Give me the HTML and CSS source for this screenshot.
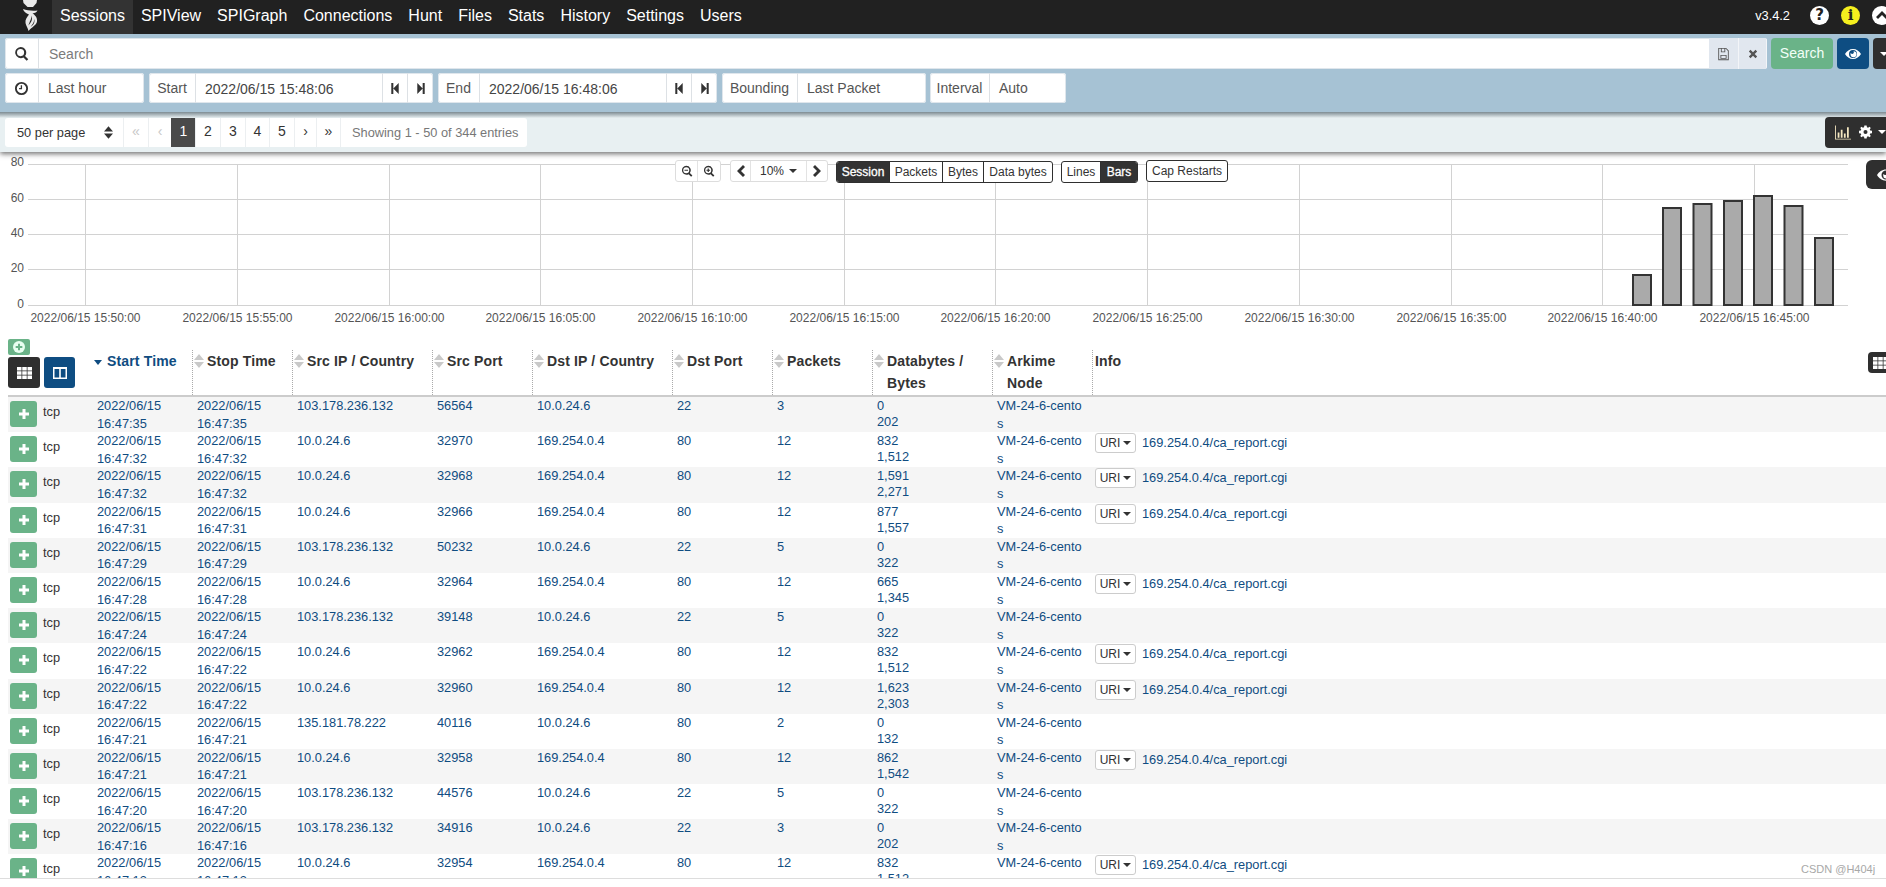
FILE: index.html
```html
<!DOCTYPE html>
<html lang="en">
<head>
<meta charset="utf-8">
<title>Arkime Sessions</title>
<link rel="stylesheet" href="styles.css">
</head>
<body>
<svg class="sprite" aria-hidden="true">
  <symbol id="plus" viewBox="0 0 12 12"><path d="M4.500 1h3v3.500H11v3H7.500V11h-3V7.500H1v-3h3.500z"/></symbol>
  <symbol id="search" viewBox="0 0 16 16"><path fill-rule="evenodd" d="M7 1a6 6 0 0 1 4.800 9.600l3.400 3.400-1.700 1.700-3.400-3.400A6 6 0 1 1 7 1zm0 2.200a3.800 3.800 0 1 0 0 7.600 3.800 3.800 0 0 0 0-7.600z"/></symbol>
  <symbol id="zoomout" viewBox="0 0 16 16"><path fill-rule="evenodd" d="M7 1a6 6 0 0 1 4.800 9.600l3.400 3.400-1.700 1.700-3.400-3.400A6 6 0 1 1 7 1zm0 2a4 4 0 1 0 0 8 4 4 0 0 0 0-8zM4.600 6.200h4.800v1.600H4.600z"/></symbol>
  <symbol id="zoomin" viewBox="0 0 16 16"><path fill-rule="evenodd" d="M7 1a6 6 0 0 1 4.800 9.600l3.400 3.400-1.700 1.700-3.400-3.400A6 6 0 1 1 7 1zm0 2a4 4 0 1 0 0 8 4 4 0 0 0 0-8zM6.200 4.600h1.600v1.600h1.600v1.600H7.800v1.600H6.200V7.800H4.600V6.200h1.600z"/></symbol>
  <symbol id="clock" viewBox="0 0 16 16"><path fill-rule="evenodd" d="M8 1a7 7 0 1 1 0 14A7 7 0 0 1 8 1zm0 2a5 5 0 1 0 0 10A5 5 0 0 0 8 3zM7.200 4.500h1.400v4.200H5.400V7.400h1.800z"/></symbol>
  <symbol id="first" viewBox="0 0 10 14"><path d="M1 1h2.200v12H1zM9 1v12L3.200 7z"/></symbol>
  <symbol id="last" viewBox="0 0 10 14"><path d="M9 1H6.800v12H9zM1 1v12l5.800-6z"/></symbol>
  <symbol id="save" viewBox="0 0 12 16"><path fill-rule="evenodd" d="M0 1h9l3 3v11H0zm1 1v12h10V4.500L8.600 2H8v4H3V2zm3 0v3h3V2zM2.500 9h7v4.500h-7zm1 1v2.500h5V10z"/></symbol>
  <symbol id="times" viewBox="0 0 12 12"><path d="M3 1l3 3 3-3 2 2-3 3 3 3-2 2-3-3-3 3-2-2 3-3-3-3z"/></symbol>
  <symbol id="eye" viewBox="0 0 16 10"><path fill-rule="evenodd" d="M8 0c3.400 0 6.300 2.100 8 5-1.700 2.900-4.600 5-8 5S1.700 7.900 0 5c1.700-2.900 4.600-5 8-5zm0 1a4 4 0 1 0 0 8 4 4 0 0 0 0-8zm.5 1.200a3 3 0 1 1-3 3c0-.4.100-.8.200-1.100.4.600 1 .9 1.700.9a2 2 0 0 0 1.100-2.800z"/></symbol>
  <symbol id="bars" viewBox="0 0 18 16"><path d="M0 0h1v15h17v1H0zM3 8h2v6H3zM6.500 5h2v9h-2zM10 9h2v5h-2zM13.500 2h2v12h-2z"/></symbol>
  <symbol id="cog" viewBox="0 0 16 16"><path fill-rule="evenodd" d="M6.600 0h2.800l.4 2.200 1.400.6L12.900 1.500l1.600 1.600-1.300 1.700.6 1.400 2.200.4v2.800l-2.200.4-.6 1.400 1.300 1.800-1.600 1.600-1.700-1.300-1.400.6-.4 2.100H6.600l-.4-2.100-1.400-.6-1.700 1.300-1.600-1.600 1.300-1.800-.6-1.400L0 9.400V6.600l2.200-.4.600-1.400-1.300-1.700 1.600-1.600 1.700 1.300 1.400-.6zM8 5.500a2.500 2.500 0 1 0 0 5 2.500 2.500 0 0 0 0-5z"/></symbol>
  <symbol id="grid" viewBox="0 0 15 12"><path d="M0 0h4.500v3.400H0zM5.250 0h4.500v3.400h-4.500zM10.500 0H15v3.400h-4.500zM0 4.300h4.500v3.400H0zM5.250 4.300h4.500v3.400h-4.500zM10.500 4.300H15v3.400h-4.500zM0 8.600h4.500V12H0zM5.250 8.600h4.500V12h-4.500zM10.500 8.600H15V12h-4.500z"/></symbol>
  <symbol id="cols" viewBox="0 0 14 12"><path fill-rule="evenodd" d="M0 0h14v12H0zm1.500 2v8.500h4.700V2zm6.300 0v8.500h4.700V2z"/></symbol>
  <symbol id="sort" viewBox="0 0 10 14"><path d="M5 0l5 6H0zM5 14L0 8h10z"/></symbol>
  <symbol id="left" viewBox="0 0 8 12"><path d="M6 0l2 2-4 4 4 4-2 2-6-6z"/></symbol>
  <symbol id="right" viewBox="0 0 8 12"><path d="M2 0L0 2l4 4-4 4 2 2 6-6z"/></symbol>
</svg>

<nav class="navbar">
  <a class="logo">
    <svg viewBox="0 0 52 34" width="52" height="34"><path class="logo-w" d="M23 0h14l-.500 3-3.500 4h-5.500L23.500 3zM23 9c4 1.500 9 2 14.500 1.500-.500 1.500-2.500 2.500-5 3 2.500 1.500 5 4 4.500 8-.500 3.500-5 5.500-8.500 9.500-.500-3-2.500-5-3-8-.500-3.500 1.500-6 3.500-8.500C26 13.500 23.500 11.500 23 9z"/><path class="logo-d" d="M31 15.500c1 3-1.500 6-2.500 10 2.500-3 4.800-6 2.500-10zM34 19c.5 3-1.500 5.500-3.500 8 2.500-1.500 5-4.500 3.500-8z"/></svg>
  </a>
  <a class="nav-item active">Sessions</a>
  <a class="nav-item">SPIView</a>
  <a class="nav-item">SPIGraph</a>
  <a class="nav-item">Connections</a>
  <a class="nav-item">Hunt</a>
  <a class="nav-item">Files</a>
  <a class="nav-item">Stats</a>
  <a class="nav-item">History</a>
  <a class="nav-item">Settings</a>
  <a class="nav-item">Users</a>
  <div class="nav-right">
    <span class="version">v3.4.2</span>
    <span class="round round-help">?</span>
    <span class="round round-info">i</span>
    <span class="round round-up"><svg viewBox="0 0 12 8" width="12" height="8"><path d="M6 0l6 6-2 2-4-4-4 4-2-2z"/></svg></span>
  </div>
</nav>

<section class="searchbar">
  <div class="sb-row sb-row-1">
    <div class="igroup grow">
      <span class="addon w34"><svg class="ic15"><use href="#search"/></svg></span>
      <span class="search-input">Search</span>
      <span class="addon tint w30"><svg class="ic-save"><use href="#save"/></svg></span>
      <span class="addon tint w28"><svg class="ic-times"><use href="#times"/></svg></span>
    </div>
    <a class="btn btn-green">Search</a>
    <a class="btn btn-blue"><svg class="ic-eye"><use href="#eye"/></svg></a>
    <a class="btn btn-dark btn-cut"><span class="caret caret-w"></span></a>
  </div>
  <div class="sb-row sb-row-2">
    <div class="igroup g-time">
      <span class="addon w34"><svg class="ic15"><use href="#clock"/></svg></span>
      <span class="val">Last hour</span>
    </div>
    <div class="igroup g-start">
      <span class="addon label w47">Start</span>
      <span class="val date w187">2022/06/15 15:48:06</span>
      <span class="addon step"><svg class="ic-step"><use href="#first"/></svg></span>
      <span class="addon step"><svg class="ic-step"><use href="#last"/></svg></span>
    </div>
    <div class="igroup g-end">
      <span class="addon label w42">End</span>
      <span class="val date w187">2022/06/15 16:48:06</span>
      <span class="addon step"><svg class="ic-step"><use href="#first"/></svg></span>
      <span class="addon step"><svg class="ic-step"><use href="#last"/></svg></span>
    </div>
    <div class="igroup g-bound">
      <span class="addon label w76">Bounding</span>
      <span class="val">Last Packet</span>
    </div>
    <div class="igroup g-int">
      <span class="addon label w60">Interval</span>
      <span class="val">Auto</span>
    </div>
  </div>
</section>

<section class="paging">
  <div class="pager">
    <span class="per-page">50 per page<svg class="ic-sort dark"><use href="#sort"/></svg></span>
    <a class="pg w25 off">«</a>
    <a class="pg w23 off">‹</a>
    <a class="pg w24 on">1</a>
    <a class="pg w25">2</a>
    <a class="pg w25">3</a>
    <a class="pg w24">4</a>
    <a class="pg w25">5</a>
    <a class="pg w22">›</a>
    <a class="pg w24">»</a>
    <span class="showing">Showing 1 - 50 of 344 entries</span>
  </div>
  <a class="btn btn-dark tools">
    <svg class="ic-bars"><use href="#bars"/></svg>
    <svg class="ic-cog"><use href="#cog"/></svg>
    <span class="caret caret-w"></span>
  </a>
</section>

<section class="chart">
  <svg class="plot" viewBox="0 152 1886 187" width="1886" height="187">
    <g class="grid">
      <path d="M28 164.500H1848M28 199.500H1848M28 234.500H1848M28 269.500H1848M28 305.500H1848"/>
      <path d="M85.500 164V305M237.500 164V305M389.500 164V305M540.500 164V305M692.500 164V305M844.500 164V305M995.500 164V305M1147.500 164V305M1299.500 164V305M1451.500 164V305M1602.500 164V305M1754.500 164V305"/>
    </g>
    <g class="ylabels">
      <text x="24" y="166">80</text><text x="24" y="202">60</text><text x="24" y="237">40</text><text x="24" y="272">20</text><text x="24" y="308">0</text>
    </g>
    <g class="xlabels">
      <text x="85.500" y="322">2022/06/15 15:50:00</text>
      <text x="237.500" y="322">2022/06/15 15:55:00</text>
      <text x="389.500" y="322">2022/06/15 16:00:00</text>
      <text x="540.500" y="322">2022/06/15 16:05:00</text>
      <text x="692.500" y="322">2022/06/15 16:10:00</text>
      <text x="844.500" y="322">2022/06/15 16:15:00</text>
      <text x="995.500" y="322">2022/06/15 16:20:00</text>
      <text x="1147.500" y="322">2022/06/15 16:25:00</text>
      <text x="1299.500" y="322">2022/06/15 16:30:00</text>
      <text x="1451.500" y="322">2022/06/15 16:35:00</text>
      <text x="1602.500" y="322">2022/06/15 16:40:00</text>
      <text x="1754.500" y="322">2022/06/15 16:45:00</text>
    </g>
    <g class="barset">
      <rect x="1633" y="275" width="18" height="30"/>
      <rect x="1663" y="208" width="18" height="97"/>
      <rect x="1693.500" y="204" width="18" height="101"/>
      <rect x="1724" y="201" width="18" height="104"/>
      <rect x="1754" y="196" width="18" height="109"/>
      <rect x="1784.500" y="206" width="18" height="99"/>
      <rect x="1815" y="238" width="18" height="67"/>
    </g>
  </svg>
  <div class="chart-tools">
    <div class="tg tg-light">
      <a class="tb w22"><svg class="ic12"><use href="#zoomout"/></svg></a>
      <a class="tb w22"><svg class="ic12"><use href="#zoomin"/></svg></a>
    </div>
    <div class="tg tg-light gap-a">
      <a class="tb w20"><svg class="ic-chev"><use href="#left"/></svg></a>
      <a class="tb w58">10% <span class="caret caret-d"></span></a>
      <a class="tb w20"><svg class="ic-chev"><use href="#right"/></svg></a>
    </div>
    <div class="tg tg-dark gap-b down1">
      <a class="td sel w54">Session</a>
      <a class="td w53">Packets</a>
      <a class="td w41">Bytes</a>
      <a class="td w69">Data bytes</a>
    </div>
    <div class="tg tg-dark gap-c down1">
      <a class="td w40">Lines</a>
      <a class="td sel w37">Bars</a>
    </div>
    <div class="tg tg-dark gap-c">
      <a class="td w82">Cap Restarts</a>
    </div>
  </div>
  <a class="btn btn-dark map-btn"><svg class="ic-map"><use href="#eye"/></svg></a>
</section>

<section class="results">
  <a class="btn btn-dark table-tool"><svg class="ic-grid"><use href="#grid"/></svg></a>
  <header class="thead">
    <div class="th th-tools">
      <a class="mini-add"><span class="mini-dot"><svg class="ic7"><use href="#plus"/></svg></span></a>
      <div class="tool-row">
        <a class="tool tool-dark"><svg class="ic-grid"><use href="#grid"/></svg></a>
        <a class="tool tool-blue"><svg class="ic-cols"><use href="#cols"/></svg></a>
      </div>
    </div>
    <div class="th th-first sorted"><span class="sort-down"></span><span>Start Time</span></div>
    <div class="th"><svg class="ic-sort"><use href="#sort"/></svg><span>Stop Time</span></div>
    <div class="th"><svg class="ic-sort"><use href="#sort"/></svg><span>Src IP / Country</span></div>
    <div class="th"><svg class="ic-sort"><use href="#sort"/></svg><span>Src Port</span></div>
    <div class="th"><svg class="ic-sort"><use href="#sort"/></svg><span>Dst IP / Country</span></div>
    <div class="th"><svg class="ic-sort"><use href="#sort"/></svg><span>Dst Port</span></div>
    <div class="th"><svg class="ic-sort"><use href="#sort"/></svg><span>Packets</span></div>
    <div class="th"><svg class="ic-sort"><use href="#sort"/></svg><span>Databytes /<br>Bytes</span></div>
    <div class="th"><svg class="ic-sort"><use href="#sort"/></svg><span>Arkime<br>Node</span></div>
    <div class="th th-info"><span>Info</span></div>
  </header>
  <div class="tbody">
    <div class="row"><div class="c-proto"><a class="add"><svg class="ic12"><use href="#plus"/></svg></a><span>tcp</span></div><div class="c">2022/06/15<br>16:47:35</div><div class="c">2022/06/15<br>16:47:35</div><div class="c">103.178.236.132</div><div class="c">56564</div><div class="c">10.0.24.6</div><div class="c">22</div><div class="c">3</div><div class="c c-data">0<br>202</div><div class="c c-node">VM-24-6-centos</div><div class="c c-info"></div></div>
    <div class="row"><div class="c-proto"><a class="add"><svg class="ic12"><use href="#plus"/></svg></a><span>tcp</span></div><div class="c">2022/06/15<br>16:47:32</div><div class="c">2022/06/15<br>16:47:32</div><div class="c">10.0.24.6</div><div class="c">32970</div><div class="c">169.254.0.4</div><div class="c">80</div><div class="c">12</div><div class="c c-data">832<br>1,512</div><div class="c c-node">VM-24-6-centos</div><div class="c c-info"><a class="uri">URI<span class="caret caret-d"></span></a><span>169.254.0.4/ca_report.cgi</span></div></div>
    <div class="row"><div class="c-proto"><a class="add"><svg class="ic12"><use href="#plus"/></svg></a><span>tcp</span></div><div class="c">2022/06/15<br>16:47:32</div><div class="c">2022/06/15<br>16:47:32</div><div class="c">10.0.24.6</div><div class="c">32968</div><div class="c">169.254.0.4</div><div class="c">80</div><div class="c">12</div><div class="c c-data">1,591<br>2,271</div><div class="c c-node">VM-24-6-centos</div><div class="c c-info"><a class="uri">URI<span class="caret caret-d"></span></a><span>169.254.0.4/ca_report.cgi</span></div></div>
    <div class="row"><div class="c-proto"><a class="add"><svg class="ic12"><use href="#plus"/></svg></a><span>tcp</span></div><div class="c">2022/06/15<br>16:47:31</div><div class="c">2022/06/15<br>16:47:31</div><div class="c">10.0.24.6</div><div class="c">32966</div><div class="c">169.254.0.4</div><div class="c">80</div><div class="c">12</div><div class="c c-data">877<br>1,557</div><div class="c c-node">VM-24-6-centos</div><div class="c c-info"><a class="uri">URI<span class="caret caret-d"></span></a><span>169.254.0.4/ca_report.cgi</span></div></div>
    <div class="row"><div class="c-proto"><a class="add"><svg class="ic12"><use href="#plus"/></svg></a><span>tcp</span></div><div class="c">2022/06/15<br>16:47:29</div><div class="c">2022/06/15<br>16:47:29</div><div class="c">103.178.236.132</div><div class="c">50232</div><div class="c">10.0.24.6</div><div class="c">22</div><div class="c">5</div><div class="c c-data">0<br>322</div><div class="c c-node">VM-24-6-centos</div><div class="c c-info"></div></div>
    <div class="row"><div class="c-proto"><a class="add"><svg class="ic12"><use href="#plus"/></svg></a><span>tcp</span></div><div class="c">2022/06/15<br>16:47:28</div><div class="c">2022/06/15<br>16:47:28</div><div class="c">10.0.24.6</div><div class="c">32964</div><div class="c">169.254.0.4</div><div class="c">80</div><div class="c">12</div><div class="c c-data">665<br>1,345</div><div class="c c-node">VM-24-6-centos</div><div class="c c-info"><a class="uri">URI<span class="caret caret-d"></span></a><span>169.254.0.4/ca_report.cgi</span></div></div>
    <div class="row"><div class="c-proto"><a class="add"><svg class="ic12"><use href="#plus"/></svg></a><span>tcp</span></div><div class="c">2022/06/15<br>16:47:24</div><div class="c">2022/06/15<br>16:47:24</div><div class="c">103.178.236.132</div><div class="c">39148</div><div class="c">10.0.24.6</div><div class="c">22</div><div class="c">5</div><div class="c c-data">0<br>322</div><div class="c c-node">VM-24-6-centos</div><div class="c c-info"></div></div>
    <div class="row"><div class="c-proto"><a class="add"><svg class="ic12"><use href="#plus"/></svg></a><span>tcp</span></div><div class="c">2022/06/15<br>16:47:22</div><div class="c">2022/06/15<br>16:47:22</div><div class="c">10.0.24.6</div><div class="c">32962</div><div class="c">169.254.0.4</div><div class="c">80</div><div class="c">12</div><div class="c c-data">832<br>1,512</div><div class="c c-node">VM-24-6-centos</div><div class="c c-info"><a class="uri">URI<span class="caret caret-d"></span></a><span>169.254.0.4/ca_report.cgi</span></div></div>
    <div class="row"><div class="c-proto"><a class="add"><svg class="ic12"><use href="#plus"/></svg></a><span>tcp</span></div><div class="c">2022/06/15<br>16:47:22</div><div class="c">2022/06/15<br>16:47:22</div><div class="c">10.0.24.6</div><div class="c">32960</div><div class="c">169.254.0.4</div><div class="c">80</div><div class="c">12</div><div class="c c-data">1,623<br>2,303</div><div class="c c-node">VM-24-6-centos</div><div class="c c-info"><a class="uri">URI<span class="caret caret-d"></span></a><span>169.254.0.4/ca_report.cgi</span></div></div>
    <div class="row"><div class="c-proto"><a class="add"><svg class="ic12"><use href="#plus"/></svg></a><span>tcp</span></div><div class="c">2022/06/15<br>16:47:21</div><div class="c">2022/06/15<br>16:47:21</div><div class="c">135.181.78.222</div><div class="c">40116</div><div class="c">10.0.24.6</div><div class="c">80</div><div class="c">2</div><div class="c c-data">0<br>132</div><div class="c c-node">VM-24-6-centos</div><div class="c c-info"></div></div>
    <div class="row"><div class="c-proto"><a class="add"><svg class="ic12"><use href="#plus"/></svg></a><span>tcp</span></div><div class="c">2022/06/15<br>16:47:21</div><div class="c">2022/06/15<br>16:47:21</div><div class="c">10.0.24.6</div><div class="c">32958</div><div class="c">169.254.0.4</div><div class="c">80</div><div class="c">12</div><div class="c c-data">862<br>1,542</div><div class="c c-node">VM-24-6-centos</div><div class="c c-info"><a class="uri">URI<span class="caret caret-d"></span></a><span>169.254.0.4/ca_report.cgi</span></div></div>
    <div class="row"><div class="c-proto"><a class="add"><svg class="ic12"><use href="#plus"/></svg></a><span>tcp</span></div><div class="c">2022/06/15<br>16:47:20</div><div class="c">2022/06/15<br>16:47:20</div><div class="c">103.178.236.132</div><div class="c">44576</div><div class="c">10.0.24.6</div><div class="c">22</div><div class="c">5</div><div class="c c-data">0<br>322</div><div class="c c-node">VM-24-6-centos</div><div class="c c-info"></div></div>
    <div class="row"><div class="c-proto"><a class="add"><svg class="ic12"><use href="#plus"/></svg></a><span>tcp</span></div><div class="c">2022/06/15<br>16:47:16</div><div class="c">2022/06/15<br>16:47:16</div><div class="c">103.178.236.132</div><div class="c">34916</div><div class="c">10.0.24.6</div><div class="c">22</div><div class="c">3</div><div class="c c-data">0<br>202</div><div class="c c-node">VM-24-6-centos</div><div class="c c-info"></div></div>
    <div class="row"><div class="c-proto"><a class="add"><svg class="ic12"><use href="#plus"/></svg></a><span>tcp</span></div><div class="c">2022/06/15<br>16:47:13</div><div class="c">2022/06/15<br>16:47:13</div><div class="c">10.0.24.6</div><div class="c">32954</div><div class="c">169.254.0.4</div><div class="c">80</div><div class="c">12</div><div class="c c-data">832<br>1,512</div><div class="c c-node">VM-24-6-centos</div><div class="c c-info"><a class="uri">URI<span class="caret caret-d"></span></a><span>169.254.0.4/ca_report.cgi</span></div></div>
  </div>
  <span class="watermark">CSDN @H404j</span>
</section>
</body>
</html>
```

FILE: styles.css
```css
* { box-sizing: border-box; }
html, body { margin: 0; padding: 0; }
body {
  width: 1886px;
  height: 887px;
  overflow: hidden;
  position: relative;
  background: #fff;
  color: #333;
  font-family: "Liberation Sans", Arial, sans-serif;
  font-size: 12.8px;
}
.sprite { position: absolute; width: 0; height: 0; }
svg { display: block; fill: currentColor; }

/* navbar */
.navbar {
  height: 34px;
  background: #212121;
  color: #fff;
  display: flex;
  align-items: stretch;
  font-size: 16px;
}
.logo { width: 52px; flex: none; }
.logo-w { fill: #e9e9e9; }
.logo-d { fill: #212121; }
.nav-item { padding: 0 8px; line-height: 31px; }
.nav-item.active { background: #333; }
.nav-right { margin-left: auto; margin-right: -5px; display: flex; align-items: center; padding-bottom: 4px; }
.version { font-size: 12.8px; margin-right: 20px; }
.round {
  width: 19px; height: 19px; border-radius: 50%;
  margin-left: 12px;
  display: flex; align-items: center; justify-content: center;
  font-weight: 700; font-size: 15px; color: #222; background: #fff;
  font-family: "DejaVu Sans", sans-serif;
}
.round-help { margin-left: 0; }
.round-info { background: #f5ef1e; font-family: "DejaVu Serif", serif; }
.round-up { fill: #222; }

/* search */
.searchbar {
  position: relative;
  z-index: 3;
  height: 78px;
  background: #a6c2d4;
  padding: 4px 0 0 5px;
  overflow: hidden;
}
.sb-row { display: flex; }
.sb-row-1 { height: 31px; gap: 4px; }
.sb-row-2 { height: 30px; gap: 5px; margin-top: 4px; }
.igroup {
  display: flex;
  align-items: stretch;
  background: #fff;
  border-radius: 3px;
  font-size: 14px;
  color: #555;
  overflow: hidden;
  box-shadow: inset 0 0 0 1px #dfe6ec;
}
.grow { flex: none; width: 1762px; }
.addon {
  display: flex; align-items: center; justify-content: center;
  flex: none; border-right: 1px solid #dde1e5; color: #333;
}
.label { color: #555; }
.tint { background: #e1e7ef; border-right: 1px solid #f3f5f8; color: #555; }
.w34 { width: 34px; }
.w30 { width: 30px; }
.w28 { width: 28px; }
.w47 { width: 47px; }
.w42 { width: 42px; }
.w76 { width: 76px; }
.w60 { width: 60px; }
.step { width: 25px; }
.step:last-child { border-right: 0; }
.search-input { flex: 1; padding-left: 10px; line-height: 32px; color: #7b7b7b; }
.val { padding-left: 9px; line-height: 30px; flex: 1; }
.date { flex: none; padding-left: 9px; line-height: 33px; border-right: 1px solid #dde1e5; color: #444; }
.w187 { width: 187px; }
.g-time { width: 139px; }
.g-start { width: 284px; }
.g-end { width: 279px; }
.g-bound { width: 204px; }
.g-int { width: 136px; margin-left: -1px; }
.ic15 { width: 15px; height: 15px; }
.ic-save { width: 11px; height: 14px; }
.ic-times { width: 10px; height: 10px; color: #555; }
.ic-step { width: 10px; height: 13px; color: #333; }
.ic-eye { width: 16px; height: 10px; }
.btn {
  display: flex; align-items: center; justify-content: center;
  border-radius: 4px; color: #fff; flex: none;
}
.btn-green { width: 62px; background: #6ab388; font-size: 14px; padding-bottom: 2px; color: #f2fff7; }
.btn-blue { width: 32px; background: #0e4d82; }
.btn-dark { background: #2f2f2f; }
.btn-cut { width: 30px; justify-content: flex-start; padding-left: 7px; }
.caret {
  display: inline-block; width: 0; height: 0;
  border-left: 4px solid transparent; border-right: 4px solid transparent; border-top: 4px solid #333;
}
.caret-w { border-top-color: #fff; }
.caret-d { border-top-color: #333; }

/* paging */
.paging {
  position: relative;
  z-index: 2;
  height: 40px;
  background: #e8f0f2;
  display: flex;
  align-items: center;
  justify-content: space-between;
  padding-left: 5px;
  box-shadow: 0 2px 5px rgba(0,0,0,.55);
}
.paging::before {
  content: "";
  position: absolute; left: 0; right: 0; top: 0; height: 6px;
  background: linear-gradient(#7d8b92, rgba(232,240,242,0));
}
.pager {
  position: relative;
  display: flex; align-items: stretch; height: 29px;
  background: #fff; border-radius: 3px; overflow: hidden;
}
.per-page { width: 118px; display: flex; align-items: center; justify-content: space-between; padding: 0 10px 0 12px; }
.pg {
  display: flex; align-items: center; justify-content: center;
  border-left: 1px solid #eceff1; font-size: 14px; color: #333;
  padding-bottom: 2px;
}
.pg.off { color: #c8c8c8; }
.pg.on { background: #4a4a4a; color: #fff; border-color: #4a4a4a; }
.w25 { width: 25px; }
.w23 { width: 23px; }
.w24 { width: 24px; }
.w22 { width: 22px; }
.showing { width: 187px; border-left: 1px solid #eceff1; color: #777; line-height: 29px; padding-left: 11px; }
.tools { position: relative; width: 70px; height: 31px; margin-right: -9px; justify-content: flex-start; padding-left: 10px; }
.ic-bars { width: 16px; height: 15px; color: #f4e7c0; }
.ic-cog { width: 13px; height: 14px; margin-left: 8px; }
.tools .caret { margin-left: 6px; }
.ic-sort { width: 10px; height: 14px; flex: none; color: #c9c9c9; }
.ic-sort.dark { color: #333; width: 9px; height: 13px; }

/* chart */
.chart { position: relative; height: 187px; font-size: 12px; }
.plot { position: absolute; left: 0; top: 0; }
.grid path { stroke: #d2d2d2; stroke-width: 1; fill: none; }
.ylabels text { text-anchor: end; }
.xlabels text { text-anchor: middle; }
.plot text { font-size: 12px; fill: #545454; }
.barset rect { fill: #aaa; stroke: #333; stroke-width: 2; }
.chart-tools {
  position: absolute; left: 675px; top: 8px;
  display: flex; align-items: flex-start; color: #333;
}
.tg { display: flex; height: 22px; border-radius: 3px; overflow: hidden; }
.tg-light { border: 1px solid #ddd; background: #fff; }
.tg-dark { border: 1px solid #2f2f2f; background: #fff; }
.gap-a { margin-left: 9px; }
.gap-b { margin-left: 8px; }
.gap-c { margin-left: 8px; }
.down1 { margin-top: 1px; }
.tb { display: flex; align-items: center; justify-content: center; gap: 5px; border-right: 1px solid #e3e3e3; }
.tb:last-child { border-right: 0; }
.td { display: flex; align-items: center; justify-content: center; border-right: 1px solid #2f2f2f; }
.td:last-child { border-right: 0; }
.td.sel { background: #333; color: #fff; font-weight: 400; -webkit-text-stroke: .3px #fff; }
.w20 { width: 20px; }
.w58 { width: 56px; }
.w54 { width: 53px; }
.w53 { width: 53px; }
.w41 { width: 41px; }
.w69 { width: 68px; }
.w40 { width: 39px; }
.w37 { width: 36px; }
.w82 { width: 80px; }
.ic12 { width: 12px; height: 12px; }
.ic-chev { width: 8px; height: 12px; }
.map-btn { position: absolute; left: 1866px; top: 8px; width: 40px; height: 29px; justify-content: flex-start; padding-left: 11px; border-radius: 6px; }
.ic-map { width: 18px; height: 12px; }

/* results */
.results {
  position: relative;
  height: 540px;
  padding-left: 8px;
  border-bottom: 1px solid #ddd;
  overflow: hidden;
  color: #0f4c81;
}
.thead, .row {
  display: grid;
  grid-template-columns: 84px 100px 100px 140px 100px 140px 100px 100px 120px 100px 1fr;
}
.thead {
  height: 58px;
  border-bottom: 2px solid #ccc;
}
.th {
  margin-top: 11px;
  height: 45px;
  display: flex;
  gap: 3px;
  padding-left: 1px;
  border-left: 1px dotted #aaa;
  font-size: 14px;
  font-weight: 700;
  line-height: 22px;
  letter-spacing: .15px;
  color: #333;
}
.th .ic-sort { margin-top: 4px; }
.th-tools { margin-top: 0; height: 56px; border-left: 0; padding: 0; display: block; position: relative; }
.th-first { border-left: 0; padding-left: 2px; gap: 5px; }
.th-info { padding-left: 2px; }
.sorted { color: #0f4c81; }
.sort-down {
  width: 0; height: 0; margin-top: 10px; flex: none;
  border-left: 4px solid transparent; border-right: 4px solid transparent; border-top: 5px solid #0f4c81;
}
.mini-add {
  display: flex; align-items: center; justify-content: center;
  width: 22px; height: 16px; background: #6ab388; border-radius: 2px; color: #6ab388;
}
.mini-dot { width: 12px; height: 12px; border-radius: 50%; background: #e8fff0; display: flex; align-items: center; justify-content: center; }
.ic7 { width: 8px; height: 8px; }
.tool-row { display: flex; gap: 4px; margin-top: 2px; }
.tool { width: 32px; height: 31px; border-radius: 3px; display: flex; align-items: center; justify-content: center; color: #fff; }
.tool-dark { background: #2f2f2f; }
.tool-blue { background: #0e4d82; width: 31px; }
.ic-grid { width: 15px; height: 12px; }
.ic-cols { width: 14px; height: 12px; }
.table-tool { position: absolute; left: 1868px; top: 13px; width: 40px; height: 21px; justify-content: flex-start; padding-left: 5px; }
.row { height: 35.2px; line-height: 17.6px; font-size: 12.8px; }
.row:nth-child(odd) { background: #f5f5f5; }
.c { padding: 0 6px 0 5px; }
.c-proto { display: flex; align-items: flex-start; padding: 4px 0 0 2px; color: #333; }
.add {
  width: 27px; height: 26px; border-radius: 3px; background: #6ab388;
  display: flex; align-items: center; justify-content: center; color: #fff; flex: none;
}
.c-proto span { margin: 2px 0 0 6px; }
.c-data { line-height: 16px; padding-top: 1px; }
.c-node { word-break: break-all; padding-right: 5px; }
.c-info { padding: 1px 0 0 3px; display: flex; align-items: flex-start; gap: 6px; }
.c-info > span { line-height: 19px; }
.uri {
  display: flex; align-items: center; justify-content: center; gap: 3px;
  width: 41px; height: 20px; border: 1px solid #ccc; border-radius: 3px; background: #fff;
  color: #333; font-size: 12px; line-height: 18px;
}
.watermark {
  position: absolute; left: 1801px; bottom: 2px;
  font-size: 11px; color: #a8a8a8; line-height: 13px;
}
```
